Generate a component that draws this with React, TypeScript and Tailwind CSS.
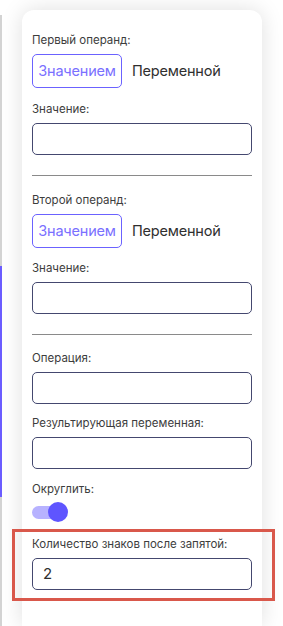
function OperandSwitch() {
  return (
    <div className="mt-[6px] flex items-center gap-[10px]">
      <div className="h-[34px] w-[90px] rounded-[5px] border border-[#6b62ff] flex items-center justify-center text-[14.5px] tracking-[-0.2px] text-[#7a70ff]">
        Значением
      </div>
      <span className="text-[14.5px] tracking-[-0.2px] text-[#2f2f2f]">Переменной</span>
    </div>
  );
}

function Field({ label, value, className = "" }: { label: string; value?: string; className?: string }) {
  return (
    <div className={className}>
      <div className="h-[16px] leading-[16px] text-[11.5px] text-[#3d3d3d]">{label}</div>
      <div className="mt-[6px] h-[32px] rounded-[5px] border border-[#44486f] px-[10px] flex items-center text-[15px] text-[#2f2f2f]">
        {value}
      </div>
    </div>
  );
}

export default function App() {
  return (
    <div
      className="relative w-[283px] h-[626px] overflow-hidden bg-white flex"
      style={{ fontFamily: "Inter, 'Noto Sans', sans-serif" }}
    >
      {/* edge of the neighbouring panel */}
      <div className="mt-[15px] w-[2px] flex flex-col">
        <div className="h-[251px] bg-[#d3d3d3]" />
        <div className="h-[231px] bg-[#6b5cff]" />
        <div className="flex-1 bg-[#d3d3d3]" />
      </div>

      {/* settings card */}
      <div className="ml-[20px] mt-[10px] w-[240px] rounded-t-[12px] bg-white shadow-[0_0_22px_rgba(0,0,0,0.13)] px-[10px] pt-[22px]">
        <div className="h-[16px] leading-[16px] text-[11.5px] text-[#3d3d3d]">Первый операнд:</div>
        <OperandSwitch />
        <Field label="Значение:" className="mt-[13px]" />

        <div className="mt-[20px] h-px bg-[#8a8a8a]" />

        <div className="mt-[16px] h-[16px] leading-[16px] text-[11.5px] text-[#3d3d3d]">Второй операнд:</div>
        <OperandSwitch />
        <Field label="Значение:" className="mt-[12px]" />

        <div className="mt-[20px] h-px bg-[#8a8a8a]" />

        <Field label="Операция:" className="mt-[15px]" />
        <Field label="Результирующая переменная:" className="mt-[11px]" />

        <div className="mt-[12px] h-[16px] leading-[16px] text-[11.5px] text-[#3d3d3d]">Округлить:</div>
        <div className="mt-[5px] relative h-[20px] w-[36px]">
          <div className="absolute left-0 top-[4px] h-[13px] w-[26px] rounded-full bg-[#b7b2ff]" />
          <div className="absolute left-[16px] top-0 h-[20px] w-[20px] rounded-full bg-[#5f55ff]" />
        </div>

        <Field label="Количество знаков после запятой:" value="2" className="mt-[14px]" />
      </div>

      {/* highlight annotation */}
      <div className="absolute left-[12px] top-[529px] h-[72px] w-[263px] border-[3px] border-[#d9584b]" />
    </div>
  );
}
